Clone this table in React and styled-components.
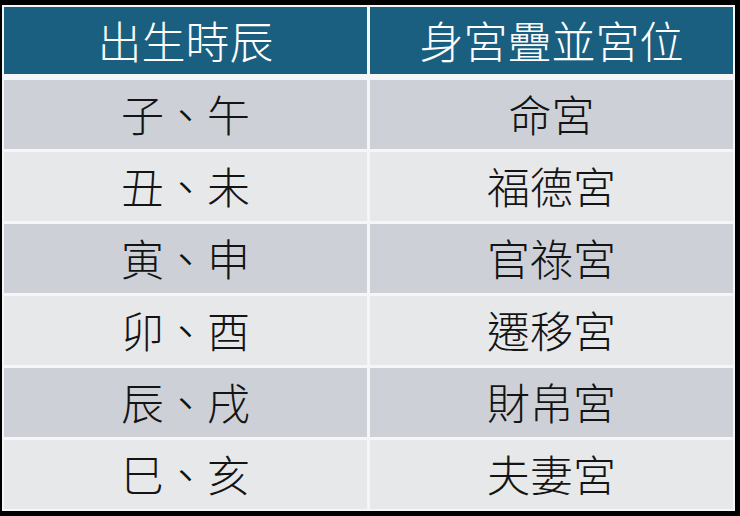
import React from 'react';
import styled, { createGlobalStyle } from 'styled-components';

const GlobalStyle = createGlobalStyle`
  html, body {
    margin: 0;
    padding: 0;
    background: #000;
  }
  body {
    font-family: "Noto Sans CJK TC", "Noto Sans CJK SC", sans-serif;
  }
`;

const Frame = styled.div`
  width: 740px;
  height: 516px;
  background: #000;
  padding: 5px 0 0 2px;
  box-sizing: border-box;
`;

const Table = styled.div`
  width: 733px;
  box-sizing: border-box;
  padding: 2px;
  background: #f4f6f8;
  display: flex;
  flex-direction: column;
  gap: 3px;
`;

const Row = styled.div`
  display: grid;
  grid-template-columns: 363px 363px;
  column-gap: 3px;
  height: ${props => props.head ? '67px' : '69px'};
  margin-bottom: ${props => props.head ? '3px' : '0'};
`;

const Cell = styled.div`
  display: flex;
  align-items: center;
  justify-content: center;
  font-weight: 300;
  font-size: ${props => props.head ? '44px' : '43px'};
  color: ${props => props.head ? '#ffffff' : '#141414'};
  background: ${props => props.head ? '#1b5f80' : props.odd ? '#cdd1d7' : '#e7e8ea'};
  line-height: 1;
  padding-bottom: ${props => props.head ? '1px' : '3px'};
`;

const rows = [
  ['子、午', '命宮'],
  ['丑、未', '福德宮'],
  ['寅、申', '官祿宮'],
  ['卯、酉', '遷移宮'],
  ['辰、戌', '財帛宮'],
  ['巳、亥', '夫妻宮'],
];

const App = () => (
  <Frame>
    <GlobalStyle />
    <Table>
      <Row head>
        <Cell head>出生時辰</Cell>
        <Cell head>身宮疊並宮位</Cell>
      </Row>
      {rows.map(([branch, palace], i) => (
        <Row key={branch}>
          <Cell odd={i % 2 === 0}>{branch}</Cell>
          <Cell odd={i % 2 === 0}>{palace}</Cell>
        </Row>
      ))}
    </Table>
  </Frame>
);

export default App;
